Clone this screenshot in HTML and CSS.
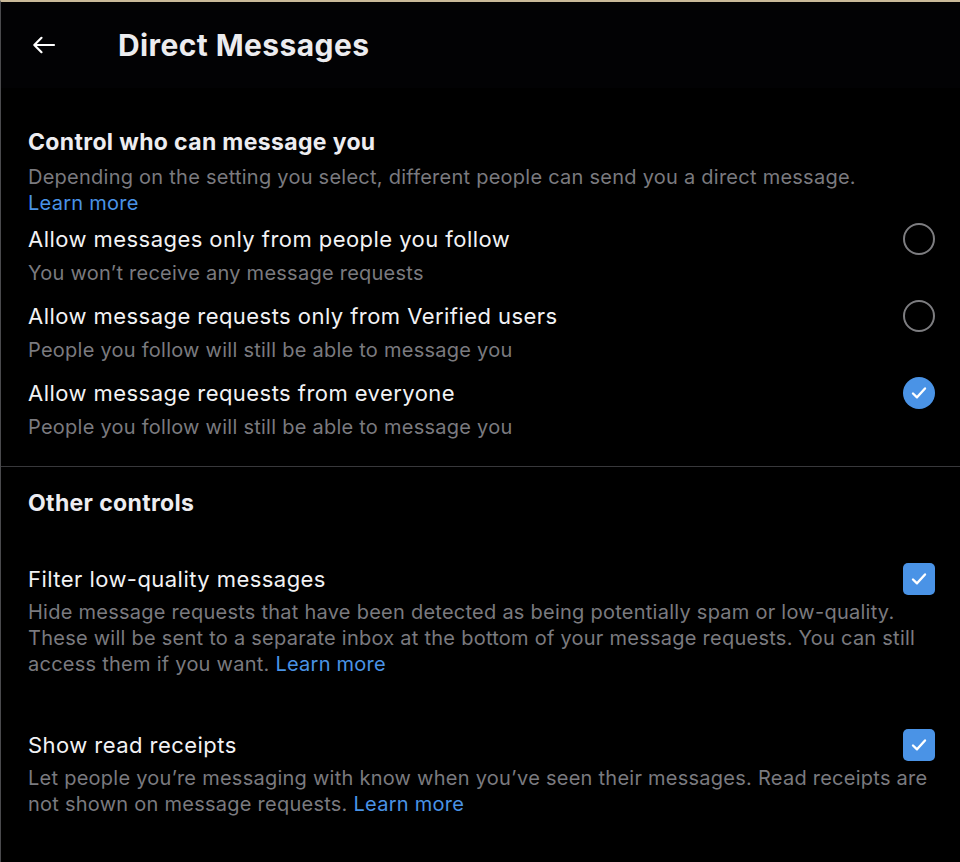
FILE: index.html
```html
<!DOCTYPE html>
<html lang="en">
<head>
  <meta charset="UTF-8">
  <meta name="viewport" content="width=device-width, initial-scale=1.0">
  <title>Direct Messages</title>
  <link rel="stylesheet" href="styles.css">
</head>
<body>
  <div class="window">
    <header class="topbar">
      <button class="back-btn" aria-label="Back">
        <svg width="24" height="18" viewBox="0 0 24 18" fill="none" stroke="currentColor" stroke-width="2.2" stroke-linecap="round" stroke-linejoin="round">
          <path d="M22 9H2.5M9.5 1.8L2.3 9l7.2 7.2"/>
        </svg>
      </button>
      <h1>Direct Messages</h1>
    </header>

    <section class="group">
      <h2>Control who can message you</h2>
      <p class="desc">Depending on the setting you select, different people can send you a direct message. <a href="#">Learn more</a></p>

      <div class="options">
        <div class="option">
          <div class="row">
            <span class="label">Allow messages only from people you follow</span>
            <span class="radio"></span>
          </div>
          <p class="sub">You won’t receive any message requests</p>
        </div>
        <div class="option">
          <div class="row">
            <span class="label">Allow message requests only from Verified users</span>
            <span class="radio"></span>
          </div>
          <p class="sub">People you follow will still be able to message you</p>
        </div>
        <div class="option">
          <div class="row">
            <span class="label">Allow message requests from everyone</span>
            <span class="radio checked">
              <svg width="20" height="20" viewBox="0 0 20 20" fill="none" stroke="#fff" stroke-width="2.4" stroke-linecap="round" stroke-linejoin="round"><path d="M4 10.5l4 3.8L16 5.5"/></svg>
            </span>
          </div>
          <p class="sub">People you follow will still be able to message you</p>
        </div>
      </div>
    </section>

    <section class="group other">
      <h2>Other controls</h2>

      <div class="control first">
        <div class="row">
          <span class="label">Filter low-quality messages</span>
          <span class="checkbox">
            <svg width="20" height="20" viewBox="0 0 20 20" fill="none" stroke="#fff" stroke-width="2.4" stroke-linecap="round" stroke-linejoin="round"><path d="M4 10.5l4 3.8L16 5.5"/></svg>
          </span>
        </div>
        <p class="sub">Hide message requests that have been detected as being potentially spam or low-quality. These will be sent to a separate inbox at the bottom of your message requests. You can still access them if you want. <a href="#">Learn more</a></p>
      </div>

      <div class="control">
        <div class="row">
          <span class="label">Show read receipts</span>
          <span class="checkbox">
            <svg width="20" height="20" viewBox="0 0 20 20" fill="none" stroke="#fff" stroke-width="2.4" stroke-linecap="round" stroke-linejoin="round"><path d="M4 10.5l4 3.8L16 5.5"/></svg>
          </span>
        </div>
        <p class="sub">Let people you’re messaging with know when you’ve seen their messages. Read receipts are not shown on message requests. <a href="#">Learn more</a></p>
      </div>
    </section>
  </div>
</body>
</html>
```

FILE: styles.css
```css
:root {
  --bg: #000;
  --text: #f2f2f4;
  --muted: #7a7a7f;
  --blue: #4a93e6;
  --line: #38383b;
}

* {
  margin: 0;
  padding: 0;
  box-sizing: border-box;
}

body {
  background: var(--bg);
  color: var(--text);
  font-family: Inter, "Noto Sans", sans-serif;
  -webkit-font-smoothing: antialiased;
}

.window {
  min-height: 862px;
  border-top: 2px solid #c9b999;
  border-left: 1px solid #4a4a4d;
}

a {
  color: var(--blue);
  text-decoration: none;
  white-space: nowrap;
}

/* Barra superior */
.topbar {
  display: flex;
  align-items: center;
  height: 86px;
  padding-left: 31px;
  background: #020204;
}

.back-btn {
  display: flex;
  background: none;
  border: none;
  color: #fff;
  cursor: pointer;
}

.topbar h1 {
  margin-left: 62px;
  font-size: 30px;
  font-weight: 700;
  letter-spacing: 0.4px;
  color: #ececef;
}

/* Grupos de opções */
.group {
  padding: 39px 25px 26px 27px;
}

.group h2 {
  font-size: 23px;
  font-weight: 700;
  line-height: 30px;
  letter-spacing: 0.35px;
  color: #ededf0;
}

.desc {
  margin-top: 7px;
  font-size: 20px;
  line-height: 26px;
  letter-spacing: 0.25px;
  color: var(--muted);
}

.options {
  display: flex;
  flex-direction: column;
  gap: 15px;
  margin-top: 8px;
}

.row {
  display: flex;
  justify-content: space-between;
  align-items: center;
  height: 30px;
}

.label {
  font-size: 22px;
  line-height: 30px;
  letter-spacing: 0.45px;
  color: var(--text);
}

.sub {
  margin-top: 6px;
  font-size: 20px;
  line-height: 26px;
  letter-spacing: 0.25px;
  color: var(--muted);
}

.radio {
  display: flex;
  align-items: center;
  justify-content: center;
  width: 32px;
  height: 32px;
  border: 2.5px solid #7d7d80;
  border-radius: 50%;
}

.radio.checked {
  border: none;
  background: var(--blue);
}

.checkbox {
  display: flex;
  align-items: center;
  justify-content: center;
  width: 32px;
  height: 32px;
  border-radius: 5px;
  background: var(--blue);
}

/* Outros controles */
.other {
  border-top: 1px solid var(--line);
  padding-top: 21px;
}

.control {
  margin-top: 53px;
}

.control.first {
  margin-top: 46px;
}

.control .sub {
  margin-top: 5px;
}
```
